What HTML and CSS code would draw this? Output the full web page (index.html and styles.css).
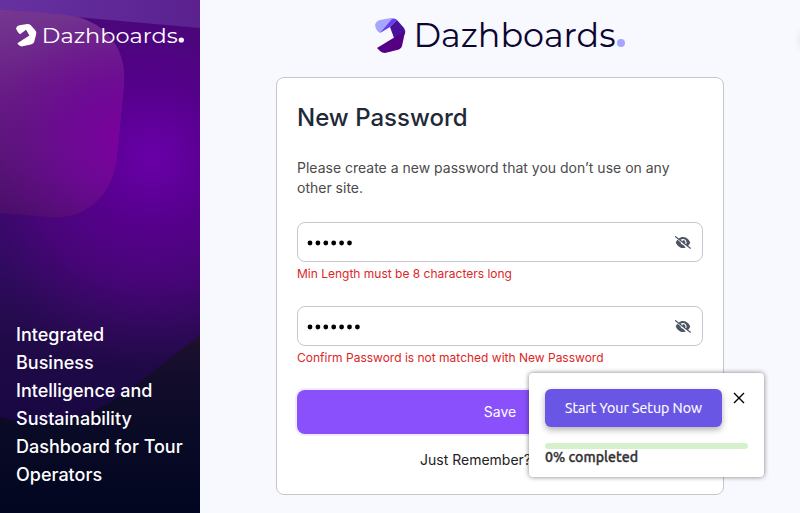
FILE: index.html
```html
<!DOCTYPE html>
<html lang="en">
<head>
<meta charset="utf-8">
<title>New Password</title>
<link rel="stylesheet" href="styles.css">
</head>
<body>
<div class="page">
  <aside class="sidebar">
    <svg class="backdrop" viewBox="0 0 200 513" preserveAspectRatio="none" aria-hidden="true">
      <defs>
        <linearGradient id="night" x1="0" y1="0" x2="0" y2="1">
          <stop offset="0" stop-color="#510e87"/><stop offset=".45" stop-color="#2f0c62"/><stop offset=".68" stop-color="#200a47"/><stop offset=".84" stop-color="#170742"/><stop offset="1" stop-color="#170742"/>
        </linearGradient>
        <radialGradient id="glow" gradientUnits="userSpaceOnUse" cx="152" cy="157" r="215">
          <stop offset="0" stop-color="#6900a8"/><stop offset=".3" stop-color="#57008e"/><stop offset=".6" stop-color="#4b047b" stop-opacity=".85"/><stop offset="1" stop-color="#3a0866" stop-opacity="0"/>
        </radialGradient>
        <linearGradient id="band" x1="0" y1="0" x2="1" y2="0">
          <stop offset="0" stop-color="#6631a0"/><stop offset="1" stop-color="#5a218f"/>
        </linearGradient>
        <linearGradient id="tile" gradientUnits="userSpaceOnUse" x1="20" y1="10" x2="40" y2="216">
          <stop offset="0" stop-color="#743790"/><stop offset=".4" stop-color="#671b85"/><stop offset="1" stop-color="#480e68"/>
        </linearGradient>
        <radialGradient id="tileglow" gradientUnits="userSpaceOnUse" cx="125" cy="142" r="135">
          <stop offset="0" stop-color="#7d009f"/><stop offset=".4" stop-color="#71069a" stop-opacity=".8"/><stop offset="1" stop-color="#6d0d91" stop-opacity="0"/>
        </radialGradient>
        <linearGradient id="hill" gradientUnits="userSpaceOnUse" x1="0" y1="335" x2="0" y2="513">
          <stop offset="0" stop-color="#20102f"/><stop offset=".2" stop-color="#140d2c"/><stop offset=".55" stop-color="#090a26"/><stop offset="1" stop-color="#020621"/>
        </linearGradient>
      </defs>
      <path fill="url(#night)" d="M0 0H200V513H0z"/>
      <path fill="url(#glow)" d="M0 0H200V513H0z"/>
      <path fill="url(#band)" d="M0 0H200V28L76 17L0 9z"/>
      <path fill="url(#tile)" d="M0 9L66 15C103 19 127 46 124 84L117 156C114 194 87 220 50 217L0 213z"/>
      <path fill="url(#tileglow)" d="M0 9L66 15C103 19 127 46 124 84L117 156C114 194 87 220 50 217L0 213z"/>
      <path fill="url(#hill)" d="M200 335L133 387Q66 437 0 417V513H200z"/>
    </svg>
    <svg class="logo logo-small" viewBox="0 0 250 36" preserveAspectRatio="none" role="img" aria-label="Dazhboards.">
      <path fill="#fff" d="M0 7Q1 3 5 2L17 0Q20 0 22 2L28 9Q31 12 30 16L27 28Q26 31 22 32L10 35Q7 36 4 33L2 30L20 18L15 9L6 16Q2 13 0 7z"/>
      <text class="wordmark" x="38.5" y="29" textLength="202" lengthAdjust="spacingAndGlyphs">Dazhboards</text>
      <circle cx="246" cy="25" r="4" fill="#fff"/>
    </svg>
    <p class="tagline">Integrated<br>Business<br>Intelligence and<br>Sustainability<br>Dashboard for Tour<br>Operators</p>
  </aside>

  <main class="content">
    <svg class="logo logo-large" viewBox="0 0 250 36" role="img" aria-label="Dazhboards.">
      <path fill="#a6a5ff" d="M0 7Q1 3 5 2L16 0Q20 0 22 2L5 15Q1 13 0 7z"/>
      <path fill="#673eea" d="M5 15L17 1Q20 0 22 2L15 9z"/>
      <path fill="#491199" d="M15 9L22 2L29 10Q31 13 30 16L19 20z"/>
      <path fill="#550084" d="M2 30L20 19L30 14L27 28Q26 31 22 32L10 35Q7 35 5 33z"/>
      <text class="wordmark" x="38.5" y="29" textLength="202" lengthAdjust="spacingAndGlyphs">Dazhboards</text>
      <circle cx="246" cy="25" r="4" fill="#a6a5ff"/>
    </svg>

    <section class="card">
      <h1>New Password</h1>
      <p class="intro">Please create a new password that you don’t use on any other site.</p>
      <div class="field">
        <div class="input">
          <svg class="dots" width="48" height="6" aria-hidden="true"><g><circle cx="3" cy="3" r="2.4"/><circle cx="10.9" cy="3" r="2.4"/><circle cx="18.8" cy="3" r="2.4"/><circle cx="26.7" cy="3" r="2.4"/><circle cx="34.6" cy="3" r="2.4"/><circle cx="42.5" cy="3" r="2.4"/></g></svg>
          <svg class="eye" viewBox="0 0 640 512" aria-hidden="true"><path d="M39 5C28-3 13-1 5 9s-6 25 4 33l592 464c10 8 25 6 33-4s6-25-4-33L526 387c39-41 66-86 79-119q5-12 0-24C576 172 480 32 320 32c-69 0-125 27-170 60zM223 150c26-23 60-38 97-38 80 0 144 64 144 144 0 25-6 48-17 69l-39-30c8-21 10-44 4-67-12-46-54-76-99-76-6 0-8 6-6 12q5 13 5 28c0 10-2 20-7 28zM373 390l-74-59c-43-9-73-47-77-90l-123-97c-31 36-53 73-64 100q-5 12 0 24c30 72 125 212 285 212 39 0 74-9 105-22l-60-70z"/></svg>
        </div>
        <p class="error">Min Length must be 8 characters long</p>
      </div>
      <div class="field">
        <div class="input">
          <svg class="dots" width="56" height="6" aria-hidden="true"><g><circle cx="3" cy="3" r="2.4"/><circle cx="10.9" cy="3" r="2.4"/><circle cx="18.8" cy="3" r="2.4"/><circle cx="26.7" cy="3" r="2.4"/><circle cx="34.6" cy="3" r="2.4"/><circle cx="42.5" cy="3" r="2.4"/><circle cx="50.4" cy="3" r="2.4"/></g></svg>
          <svg class="eye" viewBox="0 0 640 512" aria-hidden="true"><path d="M39 5C28-3 13-1 5 9s-6 25 4 33l592 464c10 8 25 6 33-4s6-25-4-33L526 387c39-41 66-86 79-119q5-12 0-24C576 172 480 32 320 32c-69 0-125 27-170 60zM223 150c26-23 60-38 97-38 80 0 144 64 144 144 0 25-6 48-17 69l-39-30c8-21 10-44 4-67-12-46-54-76-99-76-6 0-8 6-6 12q5 13 5 28c0 10-2 20-7 28zM373 390l-74-59c-43-9-73-47-77-90l-123-97c-31 36-53 73-64 100q-5 12 0 24c30 72 125 212 285 212 39 0 74-9 105-22l-60-70z"/></svg>
        </div>
        <p class="error">Confirm Password is not matched with New Password</p>
      </div>
      <button class="save">Save</button>
      <p class="remember">Just Remember?</p>
    </section>
  </main>

  <div class="setup">
    <div class="setup-top">
      <button class="start"><svg width="144" height="24"><text class="start-text" x="3" y="17" textLength="137" lengthAdjust="spacingAndGlyphs">Start Your Setup Now</text></svg></button>
      <svg class="close" width="12" height="12" viewBox="0 0 12 12"><path d="M1 1L11 11M11 1L1 11"/></svg>
    </div>
    <div class="progress"></div>
    <svg class="done" width="100" height="18"><text class="done-text" x="0" y="13" textLength="93" lengthAdjust="spacingAndGlyphs">0% completed</text></svg>
  </div>
  <div class="edge"></div>
</div>
</body>
</html>
```
FILE: styles.css
```css
* { box-sizing: border-box; }
body { margin: 0; font-family: Inter, sans-serif; }
h1, p { margin: 0; }
svg { display: block; }
.page { position: relative; display: flex; width: 800px; height: 513px; overflow: hidden; background: #f8f9fe; }

.sidebar { position: relative; width: 200px; padding: 24px 16px; display: flex; flex-direction: column; justify-content: space-between; }
.backdrop { position: absolute; inset: 0; width: 200px; height: 513px; }
.logo { position: relative; overflow: visible; flex: none; }
.logo-small { width: 168px; height: 23px; }
.logo-large { width: 250px; height: 36px; }
.wordmark { font-family: Montserrat, Lato, sans-serif; font-size: 33.5px; font-weight: 400; fill: #0b0630; }
.logo-small .wordmark { fill: #fff; }
.tagline { position: relative; font-size: 18px; font-weight: 500; line-height: 28px; color: #fff; white-space: nowrap; }

.content { flex: 1; display: flex; flex-direction: column; align-items: center; padding-top: 18px; }
.card { width: 448px; height: 418px; margin-top: 23px; padding: 20px; border: 1px solid #c7c7cb; border-radius: 8px; background: #fff; }
h1 { font-size: 24px; font-weight: 500; line-height: 40px; color: #1f2937; }
.intro { margin-top: 20px; font-size: 14px; line-height: 20px; color: #4b4b4b; }
.field { height: 60px; margin-top: 24px; }
.input { height: 40px; display: flex; align-items: center; justify-content: space-between; padding: 0 11px 0 9px; border: 1px solid #c7c7cb; border-radius: 8px; }
.dots { margin-top: 2px; }
.eye { width: 16px; height: 13px; fill: #4b5563; overflow: visible; }
.error { margin-top: 4px; font-size: 12px; line-height: 16px; color: #dc2626; }
.save { display: block; width: 406px; height: 44px; margin-top: 24px; border: 0; border-radius: 8px; background: #8950fc; color: #fff; font: 400 14px/20px Inter, sans-serif; box-shadow: 0 0 0 2px #f0ebfe; }
.remember { width: 246px; margin: 16px 0 0 123px; font-size: 14px; line-height: 20px; color: #222; }

.setup { position: absolute; left: 529px; top: 373px; width: 235px; height: 104px; padding: 16px; background: #fff; border-radius: 4px; box-shadow: 0 0 5px rgba(0, 0, 0, .5); }
.setup-top { display: flex; gap: 11px; }
.start { width: 177px; height: 38px; padding: 0; border: 0; border-radius: 6px; background: #6a56e4; display: flex; align-items: center; justify-content: center; box-shadow: 0 3px 6px rgba(0, 0, 0, .3); }
.start-text { font: 400 14.5px Ubuntu, "Noto Sans", sans-serif; fill: #fff; stroke: #fff; stroke-width: .15px; }
.close { margin: 3px 0 0 0; stroke: #000; stroke-width: 1.4; fill: none; }
.progress { height: 6px; margin-top: 16px; border-radius: 3px; background: #d4f1cc; }
.done-text { font: 500 14px Ubuntu, "Noto Sans", sans-serif; fill: #333; stroke: #333; stroke-width: .35px; }
.edge { position: absolute; left: 801px; top: 32px; width: 20px; height: 16px; box-shadow: 0 0 10px rgba(0, 0, 0, .1); }
```
